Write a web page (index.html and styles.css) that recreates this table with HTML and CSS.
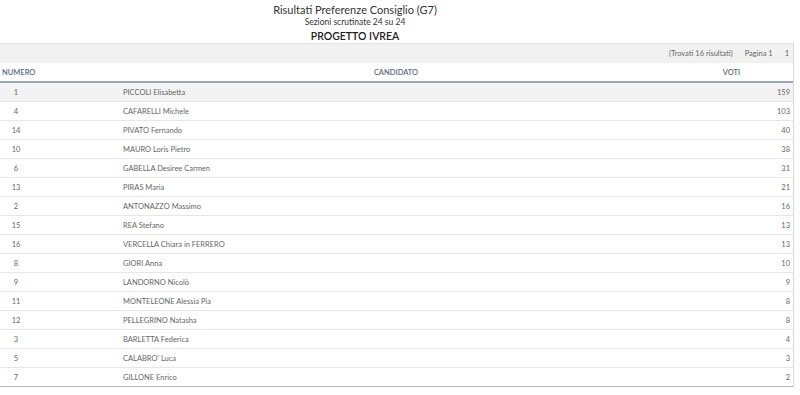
FILE: index.html
```html
<!DOCTYPE html>
<html lang="it">
<head>
<meta charset="utf-8">
<title>Risultati Preferenze Consiglio</title>
<link rel="stylesheet" href="styles.css">
</head>
<body>
<header class="head">
  <div class="title">Risultati Preferenze Consiglio (G7)</div>
  <div class="sub">Sezioni scrutinate 24 su 24</div>
  <div class="list">PROGETTO IVREA</div>
</header>
<section class="panel">
  <div class="pager">
    <span>(Trovati 16 risultati)</span>
    <span class="pg">Pagina 1</span>
    <span class="pn">1</span>
  </div>
  <table class="grid">
    <thead>
      <tr><th class="c-num">NUMERO</th><th class="c-name">CANDIDATO</th><th class="c-vot">VOTI</th></tr>
    </thead>
    <tbody>
      <tr class="hl"><td class="c-num"><span class="n">1</span></td><td class="c-name">PICCOLI Elisabetta</td><td class="c-vot">159</td></tr>
      <tr><td class="c-num"><span class="n">4</span></td><td class="c-name">CAFARELLI Michele</td><td class="c-vot">103</td></tr>
      <tr><td class="c-num"><span class="n">14</span></td><td class="c-name">PIVATO Fernando</td><td class="c-vot">40</td></tr>
      <tr><td class="c-num"><span class="n">10</span></td><td class="c-name">MAURO Loris Pietro</td><td class="c-vot">38</td></tr>
      <tr><td class="c-num"><span class="n">6</span></td><td class="c-name">GABELLA Desiree Carmen</td><td class="c-vot">31</td></tr>
      <tr><td class="c-num"><span class="n">13</span></td><td class="c-name">PIRAS Maria</td><td class="c-vot">21</td></tr>
      <tr><td class="c-num"><span class="n">2</span></td><td class="c-name">ANTONAZZO Massimo</td><td class="c-vot">16</td></tr>
      <tr><td class="c-num"><span class="n">15</span></td><td class="c-name">REA Stefano</td><td class="c-vot">13</td></tr>
      <tr><td class="c-num"><span class="n">16</span></td><td class="c-name">VERCELLA Chiara in FERRERO</td><td class="c-vot">13</td></tr>
      <tr><td class="c-num"><span class="n">8</span></td><td class="c-name">GIORI Anna</td><td class="c-vot">10</td></tr>
      <tr><td class="c-num"><span class="n">9</span></td><td class="c-name">LANDORNO Nicolò</td><td class="c-vot">9</td></tr>
      <tr><td class="c-num"><span class="n">11</span></td><td class="c-name">MONTELEONE Alessia Pia</td><td class="c-vot">8</td></tr>
      <tr><td class="c-num"><span class="n">12</span></td><td class="c-name">PELLEGRINO Natasha</td><td class="c-vot">8</td></tr>
      <tr><td class="c-num"><span class="n">3</span></td><td class="c-name">BARLETTA Federica</td><td class="c-vot">4</td></tr>
      <tr><td class="c-num"><span class="n">5</span></td><td class="c-name">CALABRO' Luca</td><td class="c-vot">3</td></tr>
      <tr><td class="c-num"><span class="n">7</span></td><td class="c-name">GILLONE Enrico</td><td class="c-vot">2</td></tr>
    </tbody>
  </table>
</section>
</body>
</html>
```
FILE: styles.css
```css
html, body {
  margin: 0;
  padding: 0;
  background: #ffffff;
}
body {
  font-family: Lato, "Open Sans", sans-serif;
  color: #555555;
  width: 800px;
}
.head {
  width: 710px;
  text-align: center;
  color: #333333;
  padding-top: 2px;
}
.title {
  font-size: 11px;
  line-height: 15px;
}
.sub {
  font-size: 8.5px;
  line-height: 11px;
}
.list {
  font-size: 10.5px;
  line-height: 14px;
  font-weight: 600;
  margin-top: 1px;
  color: #222222;
}
.panel {
  width: 793px;
  border-right: 1px solid #d8d8d8;
  border-bottom: 1px solid #b5b5b5;
}
.pager {
  height: 19px;
  background: #f1f1f1;
  display: flex;
  justify-content: flex-end;
  align-items: center;
  font-size: 7.5px;
  color: #666666;
  padding-right: 4px;
  border-top: 1px solid #e4e4e4;
}
.pager .pg {
  margin-left: 12px;
}
.pager .pn {
  margin-left: 12px;
}
.grid {
  width: 100%;
  border-collapse: collapse;
  table-layout: fixed;
  font-size: 7.5px;
}
.grid th {
  height: 18px;
  padding: 0;
  color: #566a7e;
  font-weight: 600;
  border-bottom: 2px solid #9aa6b2;
}
.grid td {
  height: 18px;
  padding: 0;
  border-bottom: 1px solid #e6e6e6;
  color: #666666;
}
.grid tbody tr:last-child td {
  border-bottom: none;
}
.grid .hl td {
  background: #f3f3f3;
}
.c-num {
  width: 120px;
  text-align: left;
}
th.c-num {
  padding-left: 2px;
}
.n {
  display: inline-block;
  width: 32px;
  text-align: center;
}
th.c-name {
  text-align: center;
}
td.c-name {
  text-align: left;
  padding-left: 1px;
}
.c-vot {
  width: 123px;
}
th.c-vot {
  text-align: center;
}
td.c-vot {
  text-align: right;
  padding-right: 3px;
}
```
